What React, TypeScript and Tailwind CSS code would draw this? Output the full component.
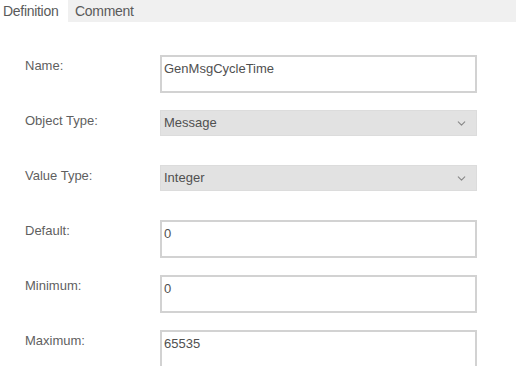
import { ChevronDown } from "lucide-react";

const font = { fontFamily: '"Liberation Sans", Arial, sans-serif' };

function TextRow({ label, value }: { label: string; value: string }) {
  return (
    <div className="flex h-[55px] items-start">
      <div className="w-[135px] pt-[4px] text-[13px] leading-[14px] text-[#5f5f5f]">{label}</div>
      <div className="h-[38px] w-[317px] shrink-0 border-2 border-[#d2d2d2] bg-white pl-[2px] pt-[5px] text-[13px] leading-[14px] text-[#505050]">
        {value}
      </div>
    </div>
  );
}

function SelectRow({ label, value }: { label: string; value: string }) {
  return (
    <div className="flex h-[55px] items-start">
      <div className="w-[135px] pt-[4px] text-[13px] leading-[14px] text-[#5f5f5f]">{label}</div>
      <div className="flex h-[26px] w-[317px] shrink-0 items-center justify-between border border-[#dcdcdc] bg-[#e2e2e2] pl-[3px] pr-[8px] text-[13px] text-[#505050]">
        <span>{value}</span>
        <ChevronDown className="h-[13px] w-[13px] text-[#888]" strokeWidth={2} />
      </div>
    </div>
  );
}

export default function App() {
  return (
    <div className="h-[387px] w-[532px] bg-white" style={font}>
      {/* tab strip */}
      <div className="flex h-[22px] w-[516px] bg-[#f0f0f0]">
        <div className="flex h-full w-[68px] items-center bg-white pl-[3px] text-[14px] tracking-[-0.3px] text-[#5a5a5a]">
          Definition
        </div>
        <div className="flex h-full items-center pl-[7px] text-[14px] tracking-[-0.3px] text-[#5a5a5a]">Comment</div>
      </div>
      {/* form, clipped at the bottom like a scroll view */}
      <div className="h-[344px] overflow-hidden pl-[25px] pt-[33px]">
        <TextRow label="Name:" value="GenMsgCycleTime" />
        <SelectRow label="Object Type:" value="Message" />
        <SelectRow label="Value Type:" value="Integer" />
        <TextRow label="Default:" value="0" />
        <TextRow label="Minimum:" value="0" />
        <TextRow label="Maximum:" value="65535" />
      </div>
    </div>
  );
}
